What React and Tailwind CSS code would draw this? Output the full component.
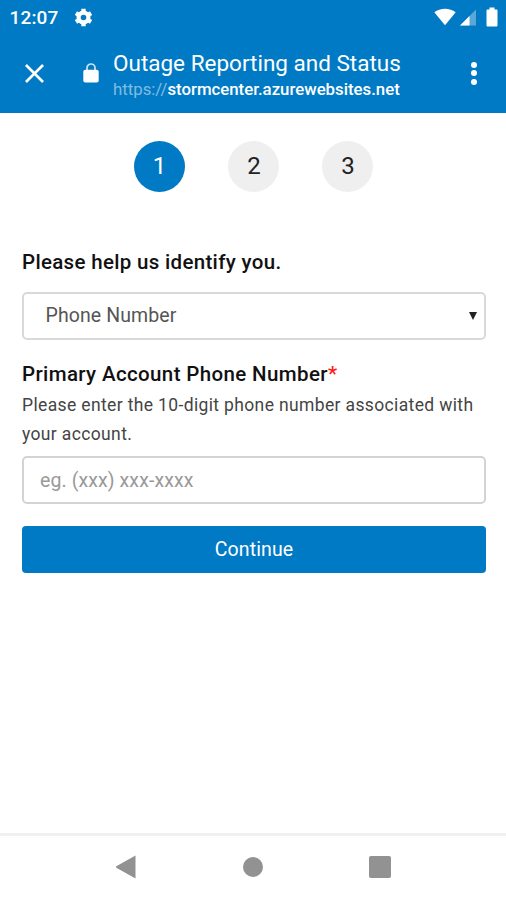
const steps = [1, 2, 3];

function StatusBar() {
  return (
    <div className="flex h-9 items-center justify-between pl-[9.5px] pr-2 text-white">
      <div className="flex items-center gap-[15px]">
        <span className="text-[19px] font-medium leading-9 tracking-[0.15px]">12:07</span>
        {/* Settings */}
        <svg className="mb-0.5 h-[21px] w-[21px]" viewBox="0 0 24 24" fill="none" stroke="currentColor">
          <circle cx="12" cy="12" r="5.6" strokeWidth="4.8" />
          <path d="M12 2V6M12 18V22M3.34 7L6.8 9M17.2 15L20.66 17M3.34 17L6.8 15M17.2 9L20.66 7" strokeWidth="5" />
        </svg>
      </div>
      <div className="flex items-center pb-0.5">
        {/* Wifi */}
        <svg className="h-[18px] w-[22px]" viewBox="0 0 22 18" fill="currentColor">
          <path d="M0.3 4.3C6.2-0.4 15.8-0.4 21.7 4.3L11 17.3Z" />
        </svg>
        {/* Mobile signal */}
        <svg className="ml-1 h-[18px] w-[17px]" viewBox="0 0 17 18" fill="currentColor">
          <path d="M16 1.5V17.5H0Z" opacity="0.35" />
          <path d="M9.5 8V17.5H0Z" />
        </svg>
        {/* Battery */}
        <svg className="ml-[9px] h-5 w-3" viewBox="0 0 12 20" fill="currentColor">
          <path d="M3.5 0.5H8.5V2.5H10.5Q11.5 2.5 11.5 3.5V18.5Q11.5 19.5 10.5 19.5H1.5Q0.5 19.5 0.5 18.5V3.5Q0.5 2.5 1.5 2.5H3.5Z" />
        </svg>
      </div>
    </div>
  );
}

function AppBar() {
  return (
    <div className="flex h-[77px] items-center pb-[3px] pl-[25px] pr-[29px] text-white">
      <button type="button" aria-label="Close">
        <svg className="h-[19px] w-[19px]" viewBox="0 0 20 20" fill="none" stroke="currentColor" strokeWidth="2.8">
          <path d="M1 1L19 19M19 1L1 19" />
        </svg>
      </button>
      {/* Lock */}
      <svg className="ml-[38.5px] h-5 w-4" viewBox="0 0 16 20" fill="currentColor">
        <path d="M4 8V5A4 4 0 0 1 12 5V8" fill="none" stroke="currentColor" strokeWidth="1.7" opacity="0.8" />
        <rect x="0.3" y="6.7" width="15.4" height="12.8" rx="2" />
      </svg>
      <div className="ml-[14.5px] flex-1 whitespace-nowrap pt-[3px]">
        <h1 className="text-[22.5px] leading-[29px]">Outage Reporting and Status</h1>
        <p className="text-[16.8px] font-medium leading-[22px]">
          <span className="font-normal text-white/50">https://</span>stormcenter.azurewebsites.net
        </p>
      </div>
      <button type="button" aria-label="More options" className="flex flex-col gap-[2.5px]">
        <span className="h-1.5 w-1.5 rounded-full bg-white" />
        <span className="h-1.5 w-1.5 rounded-full bg-white" />
        <span className="h-1.5 w-1.5 rounded-full bg-white" />
      </button>
    </div>
  );
}

function NavBar() {
  return (
    <nav className="flex h-[67px] items-center border-t-[3px] border-[#f0f0f0] pb-0.5 pl-[115px] text-[#929292]">
      <svg className="h-6 w-[21px]" viewBox="0 0 21 24" fill="currentColor">
        <path d="M1.3 11.3Q0.5 12 1.3 12.7L20.5 23.5V0.5Z" />
      </svg>
      <span className="ml-[107.4px] h-5 w-5 rounded-full bg-[#929292]" />
      <span className="ml-[105.6px] h-[22px] w-[22px] rounded-[2px] bg-[#929292]" />
    </nav>
  );
}

export default function App() {
  return (
    <div className="flex h-[900px] w-[506px] flex-col bg-white font-[Roboto,sans-serif] text-[#111]">
      <header className="bg-[#007ac5]">
        <StatusBar />
        <AppBar />
      </header>

      <main className="flex-1 pl-[22px] pr-5 pt-7">
        <div className="flex justify-center gap-[43px] pr-px">
          {steps.map((step) => (
            <div
              key={step}
              className={
                step === 1
                  ? 'flex h-[51px] w-[51px] items-center justify-center rounded-full bg-[#007ac5] pb-0.5 text-2xl text-white'
                  : 'flex h-[51px] w-[51px] items-center justify-center rounded-full bg-[#efefef] pb-0.5 pl-px text-2xl text-[#222]'
              }
            >
              {step}
            </div>
          ))}
        </div>

        <h2 className="mt-[55px] text-[20.5px] font-medium leading-[30px] tracking-[0.32px]">Please help us identify you.</h2>
        <div className="mt-[15px] flex h-12 items-center justify-between rounded-[5px] border-2 border-[#d9d9d9] pl-[21.5px] pr-[7px] text-[19.5px] tracking-[0.1px] text-[#555]">
          <span>Phone Number</span>
          <svg className="h-2 w-2" viewBox="0 0 8 8" fill="#222">
            <path d="M0 0H8L4 8Z" />
          </svg>
        </div>

        <label htmlFor="phone" className="mt-[19px] block text-[20.5px] font-medium leading-[30px] tracking-[0.37px]">
          Primary Account Phone Number<span className="text-[#ff1a1a]">*</span>
        </label>
        <p className="pt-[1.5px] text-[17.5px] leading-[29.5px] tracking-[0.36px] text-[#444]">
          Please enter the 10-digit phone number associated with your account.
        </p>
        <input
          id="phone"
          type="tel"
          placeholder="eg. (xxx) xxx-xxxx"
          className="mt-[6.5px] block h-12 w-full rounded-[5px] border-2 border-[#d3d3d3] px-4 text-[19.5px] tracking-[0.1px] placeholder:text-[#999]"
        />
        <button
          type="button"
          className="mt-[21.5px] block h-[47px] w-full rounded-[4px] bg-[#007ac5] pt-px text-[19.5px] tracking-[0.1px] text-white"
        >
          Continue
        </button>
      </main>

      <NavBar />
    </div>
  );
}
